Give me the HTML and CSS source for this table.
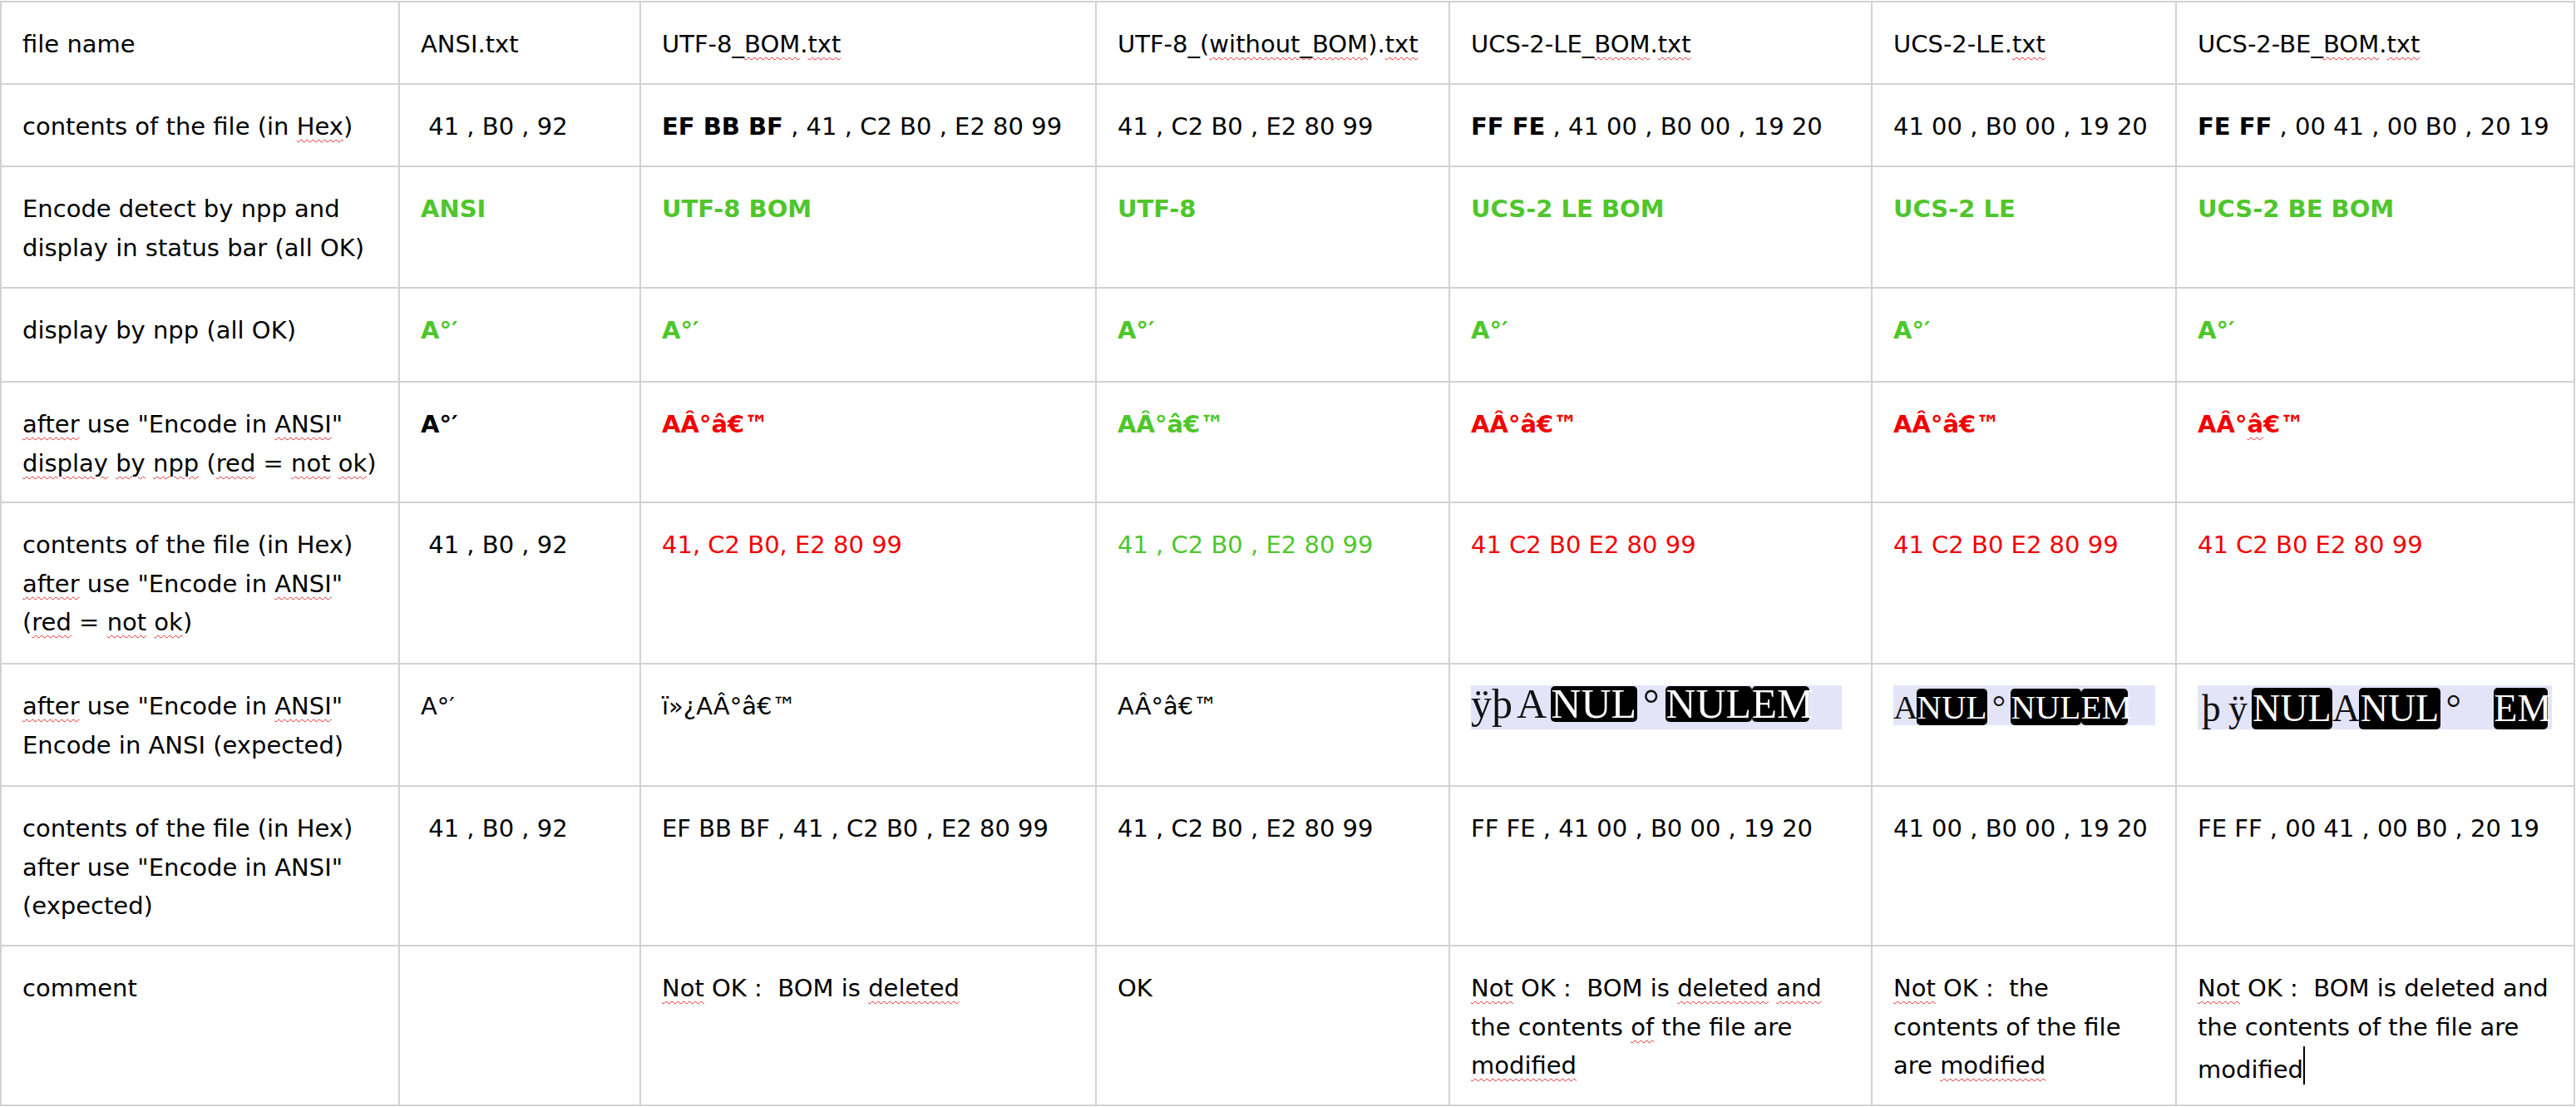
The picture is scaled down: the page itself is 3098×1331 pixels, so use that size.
FILE: index.html
```html
<!DOCTYPE html>
<html>
<head>
<meta charset="utf-8">
<title>Encode in ANSI</title>
<link rel="stylesheet" href="styles.css">
</head>
<body>
<div class="grid">
  <div class="c">file name</div>
  <div class="c">ANSI.txt</div>
  <div class="c">UTF-8_<span class="u">BOM</span>.<span class="u">txt</span></div>
  <div class="c">UTF-8_(<span class="u">without_BOM</span>).<span class="u">txt</span></div>
  <div class="c">UCS-2-LE_<span class="u">BOM</span>.<span class="u">txt</span></div>
  <div class="c">UCS-2-LE.<span class="u">txt</span></div>
  <div class="c">UCS-2-BE_<span class="u">BOM</span>.<span class="u">txt</span></div>

  <div class="c">contents of the file (in <span class="u">Hex</span>)</div>
  <div class="c">&nbsp;41 , B0 , 92</div>
  <div class="c"><span class="b">EF BB BF</span> , 41 , C2 B0 , E2 80 99</div>
  <div class="c">41 , C2 B0 , E2 80 99</div>
  <div class="c"><span class="b">FF FE</span> , 41 00 , B0 00 , 19 20</div>
  <div class="c">41 00 , B0 00 , 19 20</div>
  <div class="c"><span class="b">FE FF</span> , 00 41 , 00 B0 , 20 19</div>

  <div class="c">Encode detect by npp and<br>display in status bar (all OK)</div>
  <div class="c b g">ANSI</div>
  <div class="c b g">UTF-8 BOM</div>
  <div class="c b g">UTF-8</div>
  <div class="c b g">UCS-2 LE BOM</div>
  <div class="c b g">UCS-2 LE</div>
  <div class="c b g">UCS-2 BE BOM</div>

  <div class="c">display by npp (all OK)</div>
  <div class="c b g">A°′</div>
  <div class="c b g">A°′</div>
  <div class="c b g">A°′</div>
  <div class="c b g">A°′</div>
  <div class="c b g">A°′</div>
  <div class="c b g">A°′</div>

  <div class="c"><span class="u">after</span> use "Encode in <span class="u">ANSI</span>"<br><span class="u">display</span> <span class="u">by</span> <span class="u">npp</span> (<span class="u">red</span> = <span class="u">not</span> <span class="u">ok</span>)</div>
  <div class="c b">A°′</div>
  <div class="c b r">AÂ°â€™</div>
  <div class="c b g">AÂ°â€™</div>
  <div class="c b r">AÂ°â€™</div>
  <div class="c b r">AÂ°â€™</div>
  <div class="c b r">AÂ°<span class="u">â</span>€™</div>

  <div class="c">contents of the file (in Hex)<br><span class="u">after</span> use "Encode in <span class="u">ANSI</span>"<br>(<span class="u">red</span> = <span class="u">not</span> <span class="u">ok</span>)</div>
  <div class="c">&nbsp;41 , B0 , 92</div>
  <div class="c r">41, C2 B0, E2 80 99</div>
  <div class="c g">41 , C2 B0 , E2 80 99</div>
  <div class="c r">41 C2 B0 E2 80 99</div>
  <div class="c r">41 C2 B0 E2 80 99</div>
  <div class="c r">41 C2 B0 E2 80 99</div>

  <div class="c"><span class="u">after</span> use "Encode in <span class="u">ANSI</span>"<br>Encode in ANSI (expected)</div>
  <div class="c">A°′</div>
  <div class="c">ï»¿AÂ°â€™</div>
  <div class="c">AÂ°â€™</div>
  <div class="c pic"><span class="sel s5"><span class="ch nat">ÿ</span><span class="ch nat">þ</span><span class="ch wide">A</span><span class="ctl">NUL</span><span class="ch">°</span><span class="ctl">NUL</span><span class="ctl two">EM</span><span class="ch"> </span></span></div>
  <div class="c pic"><span class="sel s6"><span class="ch">A</span><span class="ctl">NUL</span><span class="ch">°</span><span class="ctl">NUL</span><span class="ctl two">EM</span><span class="ch"> </span></span></div>
  <div class="c pic"><span class="sel s7"><span class="ch">þ</span><span class="ch">ÿ</span><span class="ctl">NUL</span><span class="ch">A</span><span class="ctl">NUL</span><span class="ch">°</span><span class="ch"> </span><span class="ctl two">EM</span></span></div>

  <div class="c">contents of the file (in Hex)<br>after use "Encode in ANSI"<br>(expected)</div>
  <div class="c">&nbsp;41 , B0 , 92</div>
  <div class="c">EF BB BF , 41 , C2 B0 , E2 80 99</div>
  <div class="c">41 , C2 B0 , E2 80 99</div>
  <div class="c">FF FE , 41 00 , B0 00 , 19 20</div>
  <div class="c">41 00 , B0 00 , 19 20</div>
  <div class="c">FE FF , 00 41 , 00 B0 , 20 19</div>

  <div class="c">comment</div>
  <div class="c"></div>
  <div class="c"><span class="u">Not</span> OK :&nbsp; BOM is <span class="u">deleted</span></div>
  <div class="c">OK</div>
  <div class="c"><span class="u">Not</span> OK :&nbsp; BOM is <span class="u">deleted</span> <span class="u">and</span><br>the contents <span class="u">of</span> the file are<br><span class="u">modified</span></div>
  <div class="c"><span class="u">Not</span> OK :&nbsp; the<br>contents of the file<br>are <span class="u">modified</span></div>
  <div class="c"><span class="u">Not</span> OK :&nbsp; BOM is deleted and<br>the contents of the file are<br>modified<span class="caret"></span></div>
</div>
</body>
</html>
```

FILE: styles.css
```css
html, body {
  margin: 0;
  padding: 0;
  background: #ffffff;
}

body {
  width: 3098px;
  height: 1331px;
  overflow: hidden;
}

.grid {
  display: grid;
  box-sizing: border-box;
  width: 3097px;
  margin-top: 1px;
  padding: 2px;
  gap: 2px;
  background: #d2d2d2;
  grid-template-columns: 477px 288px 546px 423px 506px 364px 477px;
  grid-template-rows: 97px 97px 144px 111px 143px 192px 145px 190px 190px;
  font-family: "DejaVu Sans", Verdana, sans-serif;
  font-size: 29px;
  line-height: 46.5px;
  color: #000000;
}

.c {
  background: #ffffff;
  padding: 27px 0 0 25px;
  white-space: nowrap;
  overflow: hidden;
}

.b {
  font-weight: bold;
}

.g {
  color: #4fc62b;
}

.r {
  color: #f20000;
}

.u {
  text-decoration-line: underline;
  text-decoration-style: wavy;
  text-decoration-color: #e02828;
  text-decoration-thickness: 1px;
  text-underline-offset: 5px;
}

.pic {
  padding-top: 25px;
}

.sel {
  --cw: 28px;
  display: inline-flex;
  align-items: flex-start;
  box-sizing: border-box;
  background: #e4e4f9;
  font-family: "Liberation Serif", "DejaVu Serif", serif;
  color: #111111;
  padding-right: 5px;
}

.s5 {
  --cw: 34.5px;
  font-size: 50px;
  height: 53px;
  line-height: 43px;
  padding-top: 1px;
}

.s6 {
  --cw: 28.2px;
  font-size: 41px;
  height: 48px;
  line-height: 44px;
  padding-top: 4px;
}

.s7 {
  --cw: 32.4px;
  font-size: 46px;
  height: 53px;
  line-height: 50px;
  padding-top: 3px;
}

.ch {
  display: inline-block;
  width: var(--cw);
  text-align: center;
  white-space: pre;
}

.ch.nat {
  width: auto;
}

.ch.wide {
  width: 46px;
}

.ctl {
  display: inline-block;
  width: calc(var(--cw) * 3);
  text-align: center;
  background: #000000;
  color: #ffffff;
  border-radius: 5px;
}

.ctl.two {
  width: calc(var(--cw) * 2);
}

.caret {
  display: inline-block;
  width: 2px;
  height: 46px;
  background: #000000;
  vertical-align: -8px;
}
```
